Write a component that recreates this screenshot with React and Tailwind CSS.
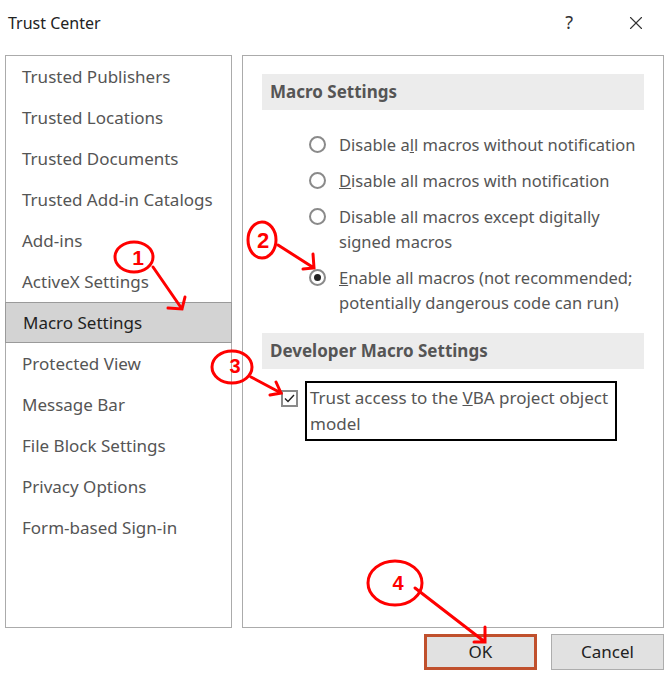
import { X } from "lucide-react";

const menu = [
  "Trusted Publishers",
  "Trusted Locations",
  "Trusted Documents",
  "Trusted Add-in Catalogs",
  "Add-ins",
  "ActiveX Settings",
  "Macro Settings",
  "Protected View",
  "Message Bar",
  "File Block Settings",
  "Privacy Options",
  "Form-based Sign-in",
];

function Radio({ checked }) {
  return (
    <span className="mt-[4px] flex h-[17px] w-[17px] shrink-0 items-center justify-center rounded-full border-[2px] border-[#8a8a8a] bg-white">
      {checked && <span className="h-[7px] w-[7px] rounded-full bg-[#222]" />}
    </span>
  );
}

function Annotations() {
  const red = "#ff0000";
  return (
    <svg className="pointer-events-none absolute inset-0" width="667" height="676" viewBox="0 0 667 676">
      <g fill="none" stroke={red} strokeWidth="3" strokeLinecap="round">
        <ellipse cx="134" cy="257" rx="19" ry="15" />
        <path d="M153 267 L182 309 M168 308 L182 309 L185 297" />
        <ellipse cx="262" cy="240" rx="14" ry="18" />
        <path d="M278 245 L314 268 M303 269 L314 268 L313 254" />
        <ellipse cx="232" cy="367" rx="20" ry="16" />
        <path d="M251 377 L281 393 M270 395 L281 393 L276 382" />
        <ellipse cx="395" cy="583" rx="27" ry="22" />
        <path d="M415 588 L485 642 M474 642 L485 642 L485 627" />
      </g>
      <g fill={red} fontFamily="'Liberation Sans', sans-serif" fontWeight="700" textAnchor="middle">
        <text x="138" y="265" fontSize="21">1</text>
        <text x="263" y="248" fontSize="22">2</text>
        <text x="235" y="373" fontSize="20">3</text>
        <text x="398" y="590" fontSize="20">4</text>
      </g>
    </svg>
  );
}

export default function App() {
  return (
    <div className="relative h-[676px] w-[667px] overflow-hidden bg-white text-[#444] font-['Noto_Sans',sans-serif]">
      <div className="flex h-[45px] items-center pl-[8px] pr-[20px]">
        <span className="text-[16px] text-[#222]">Trust Center</span>
        <span className="ml-auto mr-[52px] text-[18px] text-[#333]">?</span>
        <X className="h-[22px] w-[22px] text-[#333]" strokeWidth={1.2} />
      </div>
      <div className="mt-[10px] flex gap-[10px] pl-[5px]">
        <div className="h-[573px] w-[227px] border border-[#ababab] bg-white">
          {menu.map((m) => (
            <div
              key={m}
              className={
                m === "Macro Settings"
                  ? "-mx-[1px] flex h-[41px] items-center border border-[#9a9a9a] bg-[#d3d3d3] pl-[17px] text-[17px] text-[#222]"
                  : "flex h-[41px] items-center pl-[16px] text-[17px] text-[#555]"
              }
            >
              {m}
            </div>
          ))}
        </div>
        <div className="h-[573px] w-[422px] border border-[#ababab] px-[19px] pt-[18px]">
          <div className="flex h-[36px] items-center bg-[#ececec] pl-[8px] text-[17px] font-bold text-[#555]">
            Macro Settings
          </div>
          <div className="mt-[22px] flex flex-col gap-[11px] pl-[47px] text-[16.5px] leading-[25px] text-[#555] whitespace-nowrap">
            <div className="flex gap-[13px]">
              <Radio />
              <span>
                Disable a<u>l</u>l macros without notification
              </span>
            </div>
            <div className="flex gap-[13px]">
              <Radio />
              <span>
                <u>D</u>isable all macros with notification
              </span>
            </div>
            <div className="flex gap-[13px]">
              <Radio />
              <span>
                Disable all macros except digitally
                <br />
                signed macros
              </span>
            </div>
            <div className="flex gap-[13px]">
              <Radio checked />
              <span>
                <u>E</u>nable all macros (not recommended;
                <br />
                potentially dangerous code can run)
              </span>
            </div>
          </div>
          <div className="mt-[18px] flex h-[36px] items-center bg-[#ececec] pl-[8px] text-[17px] font-bold text-[#555]">
            Developer Macro Settings
          </div>
          <div className="mt-[12px] flex items-start pl-[19px]">
            <span className="mt-[9px] flex h-[17px] w-[17px] shrink-0 items-center justify-center border-[2px] border-[#8a8a8a] bg-white">
              <svg width="11" height="9" viewBox="0 0 11 9">
                <path d="M1 4.5 L4 7.5 L10 1" fill="none" stroke="#222" strokeWidth="1.4" />
              </svg>
            </span>
            <div className="ml-[7px] w-[312px] whitespace-nowrap border-[2px] border-black pl-[3px] pt-[2px] pb-[2px] text-[17px] leading-[26px] text-[#555]">
              Trust access to the <u>V</u>BA project object
              <br />
              model
            </div>
          </div>
        </div>
      </div>
      <div className="mt-[6px] flex justify-end gap-[14px] pr-[3px]">
        <button className="flex h-[36px] w-[113px] items-center justify-center border-[3px] border-[#c0502d] bg-[#e1e1e1] text-[17px] text-[#222]">
          OK
        </button>
        <button className="flex h-[36px] w-[113px] items-center justify-center border border-[#adadad] bg-[#e1e1e1] text-[17px] text-[#222]">
          Cancel
        </button>
      </div>
      <Annotations />
    </div>
  );
}
